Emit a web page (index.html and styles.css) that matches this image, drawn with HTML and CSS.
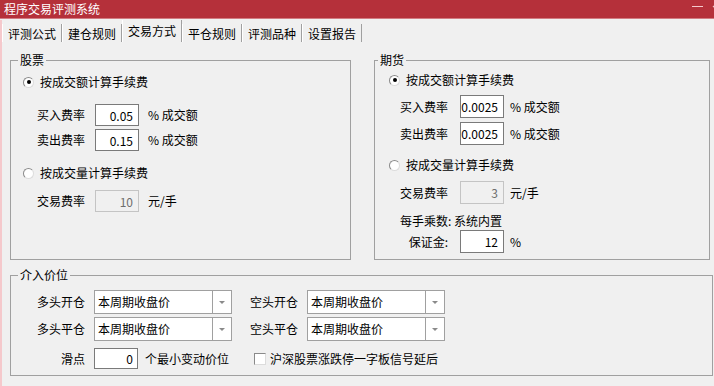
FILE: index.html
```html
<!DOCTYPE html>
<html>
<head>
    <meta charset="utf-8">
    <title>程序交易评测系统</title>
    <link rel="stylesheet" href="styles.css">
</head>
<body>
    <div class="titlebar">
        <span class="title">程序交易评测系统</span>
        <span class="min-btn"></span>
        <span class="close-btn">
            <svg width="10" height="10" viewBox="0 0 10 10"><path d="M1 1 L9 9 M9 1 L1 9" stroke="#f5c9cc" stroke-width="1.2"/></svg>
        </span>
    </div>
    <div class="window">
        <div class="tabs">
            <div class="tab">评测公式</div>
            <div class="tab">建仓规则</div>
            <div class="tab active">交易方式</div>
            <div class="tab">平仓规则</div>
            <div class="tab">评测品种</div>
            <div class="tab">设置报告</div>
        </div>
        <div class="panel">
            <div class="groups">
                <fieldset class="group stock">
                    <legend>股票</legend>
                    <div class="radio-row by-amount"><span class="radio checked"></span>按成交额计算手续费</div>
                    <div class="field-row rate-buy"><span class="label">买入费率</span><input class="num" value="0.05" readonly><span class="suffix">% 成交额</span></div>
                    <div class="field-row rate-sell"><span class="label">卖出费率</span><input class="num" value="0.15" readonly><span class="suffix">% 成交额</span></div>
                    <div class="radio-row by-volume"><span class="radio"></span>按成交量计算手续费</div>
                    <div class="field-row fee"><span class="label">交易费率</span><input class="num off" value="10" readonly><span class="suffix">元/手</span></div>
                </fieldset>
                <fieldset class="group futures">
                    <legend>期货</legend>
                    <div class="radio-row by-amount"><span class="radio checked"></span>按成交额计算手续费</div>
                    <div class="field-row rate-buy"><span class="label">买入费率</span><input class="num" value="0.0025" readonly><span class="suffix">% 成交额</span></div>
                    <div class="field-row rate-sell"><span class="label">卖出费率</span><input class="num" value="0.0025" readonly><span class="suffix">% 成交额</span></div>
                    <div class="radio-row by-volume"><span class="radio"></span>按成交量计算手续费</div>
                    <div class="field-row fee"><span class="label">交易费率</span><input class="num off" value="3" readonly><span class="suffix">元/手</span></div>
                    <div class="text-row multiplier">每手乘数: 系统内置</div>
                    <div class="field-row deposit"><span class="label right">保证金:</span><input class="num" value="12" readonly><span class="suffix">%</span></div>
                </fieldset>
            </div>
            <fieldset class="group entry">
                <legend>介入价位</legend>
                <div class="entry-row open">
                    <div class="pair">
                        <span class="label-r">多头开仓</span>
                        <div class="combo"><span class="combo-text">本周期收盘价</span><span class="combo-btn"><i class="arrow"></i></span></div>
                    </div>
                    <div class="pair second">
                        <span class="label-s">空头开仓</span>
                        <div class="combo"><span class="combo-text">本周期收盘价</span><span class="combo-btn"><i class="arrow"></i></span></div>
                    </div>
                </div>
                <div class="entry-row close">
                    <div class="pair">
                        <span class="label-r">多头平仓</span>
                        <div class="combo"><span class="combo-text">本周期收盘价</span><span class="combo-btn"><i class="arrow"></i></span></div>
                    </div>
                    <div class="pair second">
                        <span class="label-s">空头平仓</span>
                        <div class="combo"><span class="combo-text">本周期收盘价</span><span class="combo-btn"><i class="arrow"></i></span></div>
                    </div>
                </div>
                <div class="entry-row slip">
                    <div class="pair">
                        <span class="label-r">滑点</span>
                        <input class="num slip-input" value="0" readonly>
                        <span class="suffix-s">个最小变动价位</span>
                    </div>
                    <div class="pair second check-pair">
                        <span class="checkbox"></span>沪深股票涨跌停一字板信号延后
                    </div>
                </div>
            </fieldset>
        </div>
    </div>
</body>
</html>
```

FILE: styles.css
```css
* {
    box-sizing: border-box;
}

body {
    margin: 0;
    width: 714px;
    height: 386px;
    overflow: hidden;
    background: #f0f0f0;
    color: #000;
    font-family: "Noto Sans CJK SC", "Microsoft YaHei", sans-serif;
    font-size: 12px;
    line-height: 16px;
}

.titlebar {
    height: 19px;
    background: #b5303a;
    border-bottom: 1px solid #d27c82;
    display: flex;
    align-items: center;
    padding-left: 4px;
    color: #fff;
    overflow: hidden;
}

.title {
    flex: 1;
}

.min-btn {
    width: 11px;
    height: 1px;
    margin-top: -6px;
    margin-right: 9px;
    background: #f5c9cc;
}

.close-btn {
    width: 2px;
    height: 10px;
    margin-top: -4px;
    overflow: hidden;
}

.window {
    height: 367px;
    border-left: 2px solid #f5c9cc;
    border-bottom: 1px solid #a0a0a0;
}

.tabs {
    display: flex;
    align-items: flex-end;
    height: 22px;
    margin-top: 1px;
}

.tab {
    height: 18px;
    padding: 2px 5px 0;
    border-left: 1px solid #fff;
    border-right: 1px solid #a0a0a0;
}

.tab.active {
    height: 22px;
    padding-top: 3px;
}

.panel {
    padding: 0 1px 0 8px;
}

.groups {
    display: flex;
    gap: 23px;
    height: 207px;
    margin-top: 11px;
}

.group {
    margin: 0;
    padding: 0;
    min-width: 0;
    border: 1px solid #a0a0a0;
}

.group legend {
    padding: 0 2px;
    margin-left: 7px;
    line-height: 14px;
}

.stock {
    width: 341px;
}

.futures {
    width: 336px;
}

.futures legend {
    margin-left: 3px;
}

.radio-row {
    display: flex;
    align-items: center;
    height: 16px;
}

.radio {
    width: 11px;
    height: 11px;
    margin-right: 6px;
    border-radius: 50%;
    border: 1px solid;
    border-color: #8a8a8a #dcdcdc #dcdcdc #8a8a8a;
    background: #fff;
    display: flex;
    align-items: center;
    justify-content: center;
}

.radio.checked::after {
    content: "";
    width: 4px;
    height: 4px;
    border-radius: 50%;
    background: #000;
}

.field-row {
    display: flex;
    align-items: center;
    height: 22px;
}

.text-row {
    height: 16px;
}

.num {
    width: 44px;
    height: 22px;
    margin: 0;
    padding: 0 5px 0 0;
    border: 1px solid #7a7a7a;
    background: #fff;
    color: #000;
    font: inherit;
    text-align: right;
    outline: none;
}

.num.off {
    border-color: #c4c4c4;
    background: #f0f0f0;
    color: #6d6d6d;
}

/* stock group */
.stock .radio-row {
    padding-left: 12px;
}

.stock .field-row {
    padding-left: 26px;
}

.stock .label {
    width: 58px;
}

.stock .suffix {
    margin-left: 9px;
}

.stock .by-amount {
    margin-top: 7px;
}

.stock .rate-buy {
    margin-top: 14px;
}

.stock .rate-sell {
    margin-top: 3px;
}

.stock .by-volume {
    margin-top: 14px;
}

.stock .fee {
    margin-top: 9px;
}

/* futures group */
.futures .radio-row {
    padding-left: 14px;
}

.futures .field-row,
.futures .text-row {
    padding-left: 25px;
}

.futures .field-row {
    height: 23px;
}

.futures .num {
    height: 23px;
}

.futures .label {
    width: 60px;
}

.futures .label.right {
    text-align: right;
    padding-right: 12px;
}

.futures .suffix {
    margin-left: 6px;
}

.futures .by-amount {
    margin-top: 5px;
}

.futures .rate-buy {
    margin-top: 7px;
}

.futures .rate-sell {
    margin-top: 4px;
}

.futures .by-volume {
    margin-top: 12px;
}

.futures .fee {
    margin-top: 8px;
}

.futures .multiplier {
    margin-top: 9px;
}

.futures .deposit {
    margin-top: 1px;
}

/* entry price group */
.entry {
    width: 703px;
    height: 108px;
    margin-top: 8px;
}

.entry-row {
    display: flex;
    align-items: center;
    height: 24px;
}

.entry-row.open {
    margin-top: 8px;
}

.entry-row.close {
    margin-top: 3px;
}

.entry-row.slip {
    height: 21px;
    margin-top: 7px;
}

.pair {
    display: flex;
    align-items: center;
    width: 239px;
}

.pair.second {
    width: auto;
}

.label-r {
    width: 83px;
    padding-right: 9px;
    text-align: right;
}

.label-s {
    width: 57px;
}

.combo {
    display: flex;
    width: 138px;
    height: 24px;
    border: 1px solid #a0a0a0;
    background: #fff;
}

.combo-text {
    flex: 1;
    padding-left: 3px;
    line-height: 22px;
}

.combo-btn {
    width: 19px;
    border-left: 1px solid #a0a0a0;
    display: flex;
    align-items: center;
    justify-content: center;
}

.arrow {
    width: 0;
    height: 0;
    border-left: 3px solid transparent;
    border-right: 3px solid transparent;
    border-top: 3px solid #8a8a8a;
}

.slip-input {
    width: 44px;
    height: 21px;
    padding-right: 4px;
}

.suffix-s {
    margin-left: 7px;
}

.check-pair {
    padding-left: 4px;
}

.checkbox {
    width: 12px;
    height: 12px;
    margin-right: 4px;
    border: 1px solid;
    border-color: #8a8a8a #dcdcdc #dcdcdc #8a8a8a;
    background: #fff;
}
```
